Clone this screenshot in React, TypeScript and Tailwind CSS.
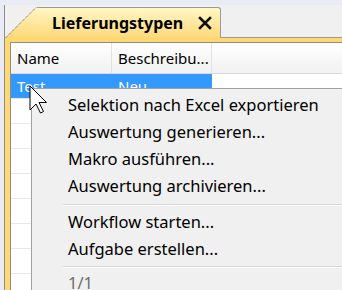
import React from "react"

const rows = [0, 1, 2, 3, 4, 5, 6, 7, 8]

const menuTop = [
  "Selektion nach Excel exportieren",
  "Auswertung generieren...",
  "Makro ausführen...",
  "Auswertung archivieren...",
]

const menuBottom = ["Workflow starten...", "Aufgabe erstellen..."]

const MenuItem = ({ label, muted = false }: { label: string; muted?: boolean }) => (
  <div className={`flex h-[27px] items-center pl-[36px] text-[16.5px] ${muted ? "text-[#6d6d6d]" : "text-black"}`}>
    {label}
  </div>
)

const Separator = ({ tall = true }: { tall?: boolean }) => (
  <div className={`flex items-center pl-[31px] ${tall ? "h-[9px]" : "h-[7px]"}`}>
    <div className="h-[2px] w-full border-t border-[#d7d7d7] bg-white" />
  </div>
)

export default function App() {
  return (
    <div className="relative flex h-[290px] w-[342px] flex-col overflow-hidden bg-[#eaecf5] font-['Noto_Sans',sans-serif]">
      <div className="h-[5px] shrink-0" />
      <div className="flex flex-1">
        <div className="w-[4px] shrink-0" />
        <div className="flex flex-1 flex-col border-l border-[#8c8c8c]">
          {/* tab strip */}
          <div className="flex h-[33px] shrink-0 items-end bg-[#f0f0f0] pt-[2px]">
            <svg width="32" height="31" viewBox="0 0 32 31" className="shrink-0">
              <defs>
                <linearGradient id="tabGrad" x1="0" y1="0" x2="0" y2="1">
                  <stop offset="0" stopColor="#fff7c4" />
                  <stop offset="1" stopColor="#ffd878" />
                </linearGradient>
              </defs>
              <polygon points="0,31 31,0 32,0 32,31" fill="url(#tabGrad)" />
              <line x1="0.5" y1="31" x2="31.5" y2="0" stroke="#5a5a5a" strokeWidth="1" strokeDasharray="1 1" />
            </svg>
            <div className="flex h-[31px] w-[184px] items-center rounded-tr-[3px] border-t border-r border-[#9a9a9a] bg-gradient-to-b from-[#fff7c4] to-[#ffd878] pl-[15px]">
              <span className="text-[16px] font-bold text-black">Lieferungstypen</span>
              <svg width="14" height="14" viewBox="0 0 14 14" className="ml-[15px]">
                <path d="M2 2 L12 12 M12 2 L2 12" stroke="#111" strokeWidth="2.6" strokeLinecap="square" />
              </svg>
            </div>
            <div className="h-full flex-1 border-b border-[#9a9a9a]" />
          </div>
          {/* frame */}
          <div className="flex flex-1 flex-col bg-[#ffd870] pl-[5px] pt-[4px]">
            <div className="flex flex-1 flex-col border-l border-t border-[#8c8c8c] bg-white text-[15px]">
              <div className="flex h-[31px] shrink-0 border-b border-[#dadada] bg-gradient-to-b from-white to-[#f1f1f1] text-black">
                <div className="flex w-[101px] items-center border-r border-[#e2e2e2] pl-[6px]">Name</div>
                <div className="flex w-[100px] items-center border-r border-[#e2e2e2] pl-[6px]">Beschreibu...</div>
                <div className="flex-1" />
              </div>
              {rows.map((r) => (
                <div key={r} className="flex h-[25px] shrink-0 border-b border-[#e8e8e8]">
                  <div
                    className={`flex w-[101px] items-center pl-[6px] ${r === 0 ? "bg-[#3399ff] text-white" : ""}`}
                  >
                    {r === 0 ? "Test" : ""}
                  </div>
                  <div className={`flex w-[100px] items-center pl-[6px] ${r === 0 ? "bg-[#3399ff] text-white" : ""}`}>
                    {r === 0 ? "Neu" : ""}
                  </div>
                  <div className="flex-1" />
                </div>
              ))}
            </div>
          </div>
        </div>
      </div>

      {/* context menu */}
      <div className="absolute left-[31px] top-[88px] h-[240px] w-[340px] border-l border-t border-[#a0a0a0] bg-[#f0f0f0] pt-[3px]">
        {menuTop.map((m) => (
          <MenuItem key={m} label={m} />
        ))}
        <Separator />
        {menuBottom.map((m) => (
          <MenuItem key={m} label={m} />
        ))}
        <Separator tall={false} />
        <MenuItem label="1/1" muted />
      </div>

      {/* mouse pointer */}
      <svg width="20" height="30" viewBox="0 0 20 30" className="absolute left-[29px] top-[85px]">
        <path
          d="M1 1 L1 25 L7 19 L11.5 28 L14.5 26.5 L10 17.5 L17.5 17.5 Z"
          fill="white"
          stroke="black"
          strokeWidth="1"
          strokeLinejoin="round"
        />
      </svg>
    </div>
  )
}
